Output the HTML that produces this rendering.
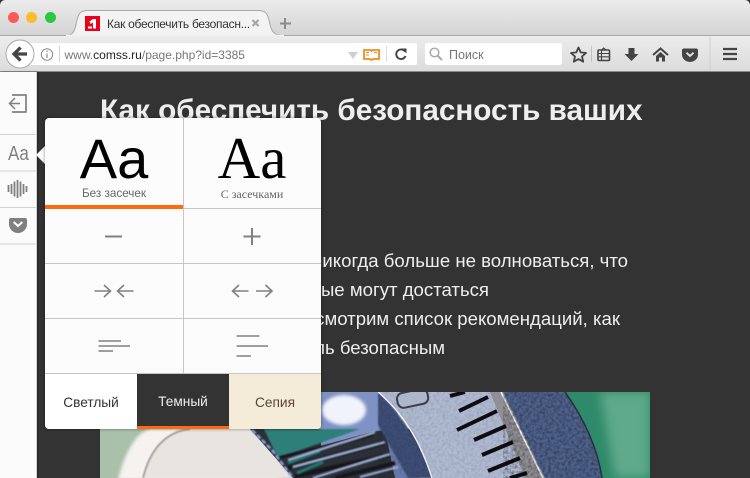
<!DOCTYPE html>
<html lang="ru"><head><meta charset="utf-8"><title>Как обеспечить безопасность</title>
<style>
html,body{margin:0;padding:0;width:750px;height:478px;overflow:hidden;background:#333;font-family:"Liberation Sans",sans-serif}
*{box-sizing:border-box}
.a{position:absolute;white-space:nowrap}
#titlebar{left:0;top:0;width:750px;height:36px;background:linear-gradient(#ececec,#d4d4d4);border-top-left-radius:5px;border-top-right-radius:5px;border-bottom:1px solid #a9a9a9}
#toolbar{left:0;top:36px;width:750px;height:36px;background:linear-gradient(#ececec,#dcdcdc);border-bottom:1px solid #8d8d8d}
.dot{width:11px;height:11px;border-radius:50%;top:12px}
.t{color:#eee;font-size:18.600px;line-height:29px}
.lbl{font-size:13.700px;color:#333;text-align:center;line-height:16px}
</style></head><body>
<div class="a" id="titlebar"></div>
<div class="a" id="toolbar"></div>
<div class="a dot" style="left:8px;background:#fc5b57"></div>
<div class="a dot" style="left:26px;background:#fdbc2e"></div>
<div class="a dot" style="left:44.500px;background:#28c83f"></div>

<svg class="a" style="left:0;top:0" width="750" height="72" viewBox="0 0 750 72">
<path d="M66 35.500C74 35.500 75 30 77 20C78.500 13 81 10.500 88 10.500H258C265 10.500 267.500 13 269 20C271 30 272 35.500 284 35.500Z" fill="#f3f3f3" stroke="#a8a8a8"/>
<path d="M66 35.500H284" stroke="#f1f1f1" stroke-width="1.500"/>
<rect x="85" y="16" width="15" height="15" fill="#e8001c"/>
<path d="M89.500 21.500L93 19H96V28.500H93V22.500L90.500 24ZM88 26.500H92V28.500H88Z" fill="#fff"/>
<path d="M252.500 20L258.500 26M258.500 20L252.500 26" stroke="#a6a6a6" stroke-width="2.200"/>
<path d="M285 18V29M280 23.500H291" stroke="#8c8c8c" stroke-width="2"/>
<path d="M30 43H415Q417 43 417 45V63Q417 65 415 65H30Z" fill="#fff"/>
<rect x="425" y="43" width="137" height="22" rx="2.500" fill="#fff"/>
<circle cx="20" cy="54" r="14" fill="#fff" stroke="#a9a9a9"/>
<path d="M20.500 47.500L14 54L20.500 60.500M14.500 54H27" fill="none" stroke="#444" stroke-width="3.300"/>
<circle cx="47" cy="54.500" r="5.700" fill="none" stroke="#8a8a8a"/>
<path d="M47 53.500V58M47 50.500V52" stroke="#8a8a8a" stroke-width="1.200"/>
<path d="M59.500 46V62" stroke="#d2d2d2"/>
<path d="M348 52H358L353 59Z" fill="#cfcfcf"/>
<path d="M364 50H370.500L371.500 51L372.500 50H379V59H373L371.500 60L370 59H364Z" fill="#fff" stroke="#f28a1e" stroke-width="1.800"/>
<path d="M366 52.500H369M366 55H369M374 52.500H377" stroke="#f28a1e"/>
<path d="M386.500 46V62" stroke="#dcdcdc"/>
<path d="M405 51.500A4.800 4.800 0 1 0 405.500 56" fill="none" stroke="#444" stroke-width="1.900"/>
<path d="M401.500 48.500H406.500V53.500Z" fill="#444"/>
<circle cx="434.500" cy="52.500" r="4.300" fill="none" stroke="#aaa" stroke-width="1.500"/>
<path d="M437.500 55.500L442 60" stroke="#aaa" stroke-width="2"/>
<path d="M578.500 47.500L580.700 52.400L586 53L582 56.500L583.200 61.700L578.500 59L573.800 61.700L575 56.500L571 53L576.300 52.400Z" fill="none" stroke="#444" stroke-width="1.800" stroke-linejoin="round"/>
<path d="M591.500 46V62" stroke="#c0c0c0"/>
<rect x="598" y="50" width="11.500" height="10.500" rx="1" fill="none" stroke="#444" stroke-width="1.600"/>
<path d="M601.500 50L603.700 48L606 50M598 53.500H609.500M598 56.800H609.500M601.500 50V60" fill="none" stroke="#444" stroke-width="1.100"/>
<path d="M628.500 48H634.500V54H638.500L631.500 61L624.500 54H628.500Z" fill="#444"/>
<path d="M653 55L660.500 48.500L668 55" fill="none" stroke="#444" stroke-width="2"/>
<path d="M656 56L660.500 52L665 56V61.500H662V57.500H659V61.500H656Z" fill="#444"/>
<path d="M684 48.500H696Q698 48.500 698 50.500V54.500A8 7.500 0 0 1 682 54.500V50.500Q682 48.500 684 48.500Z" fill="#444"/>
<path d="M686.500 52.700L690 56L693.500 52.700" fill="none" stroke="#e4e4e4" stroke-width="1.900"/>
<path d="M710 37V71" stroke="#cfcfcf"/>
<path d="M723 49H737M723 54H737M723 59H737" stroke="#444" stroke-width="2.200"/>
<path d="M0 71.500H750" stroke="#8a8a8a"/>
</svg>
<div class="a" style="left:107px;top:16px;font-size:12px;line-height:16px;color:#333;letter-spacing:-.28px">Как обеспечить безопасн...</div>
<div class="a" style="left:64.500px;top:47px;font-size:12px;line-height:16px;color:#777">www.<span style="color:#222">comss.ru</span>/page.php?id=3385</div>
<div class="a" style="left:449px;top:47px;font-size:12.500px;line-height:16px;color:#777">Поиск</div>

<div class="a" style="left:37px;top:72px;width:713px;height:406px;background:#333"></div>
<div class="a" style="left:100px;top:94px;font-size:29.700px;line-height:34px;font-weight:bold;color:#eee">Как обеспечить безопасность ваших</div>
<div class="a t" style="right:122px;top:246px">Вы можете никогда больше не волноваться, что</div>
<div class="a t" style="right:261px;top:275px">личные данные могут достаться</div>
<div class="a t" style="right:130px;top:304px">Далее рассмотрим список рекомендаций, как</div>
<div class="a t" style="right:305px;top:333px">сделать профиль безопасным</div>

<svg class="a" style="left:100px;top:392px" width="550" height="86" viewBox="100 392 550 86">
<defs>
<filter id="b1" x="-20%" y="-20%" width="140%" height="140%"><feGaussianBlur stdDeviation="5"/></filter>
<filter id="b2" x="-20%" y="-20%" width="140%" height="140%"><feGaussianBlur stdDeviation=".8"/></filter>
<filter id="b3" x="-20%" y="-20%" width="140%" height="140%"><feGaussianBlur stdDeviation="1.500"/></filter>
<filter id="n" x="0" y="0" width="100%" height="100%"><feTurbulence type="fractalNoise" baseFrequency=".35" numOctaves="2" seed="4"/><feColorMatrix values="0 0 0 0 0 0 0 0 0 0 0 0 0 0 0 0 0 0 1.300 -.45"/></filter>
</defs>
<rect x="100" y="392" width="550" height="86" fill="#a9c0ab"/>
<path d="M118 480C124 455 135 432 152 428H280V480Z" fill="#f5f2f0" filter="url(#b3)"/>
<path d="M143 478C150 450 165 432 190 429H250L293 478Z" fill="#e8e4df" filter="url(#b2)"/>
<path d="M143 478C150 450 165 432 190 429" fill="none" stroke="#8f8b86" stroke-width="1.500" filter="url(#b2)"/>
<path d="M250 429H420V478H293Z" fill="#2b3038"/>
<path d="M321 392H390L420 478H395L385 430L321 441Z" fill="#6a7cab"/>
<path d="M321 392H385V428L321 446Z" fill="#7f92c4"/>
<ellipse cx="344" cy="410" rx="22" ry="15" fill="#f0f3fb" filter="url(#b3)"/>
<path d="M264 429H360L278 458Z" fill="#2f7f7a" filter="url(#b2)"/>
<g filter="url(#b2)">
<path d="M278 458L373 435" stroke="#15181c" stroke-width="3"/>
<path d="M287 468L383 443" stroke="#15181c" stroke-width="4.500"/>
<path d="M295 476L390 455" stroke="#15181c" stroke-width="4.500"/>
<path d="M335 478L395 463" stroke="#15181c" stroke-width="4"/>
<path d="M288 463L320 451" stroke="#1f7a6c" stroke-width="3"/>
<path d="M297 473L323 462" stroke="#1f7a6c" stroke-width="3"/>
<path d="M288 460L375 432" stroke="#a3b4da" stroke-width="2"/>
<path d="M293 467L385 442" stroke="#a3b4da" stroke-width="2"/>
<path d="M313 478L390 454" stroke="#a3b4da" stroke-width="2"/>
<path d="M360 477L398 467" stroke="#a3b4da" stroke-width="2"/>
</g>
<path d="M252 430L272 450L293 478" fill="none" stroke="#8ea3d8" stroke-width="2.500" stroke-dasharray="5 2" filter="url(#b2)"/>
<path d="M378 425L408 478L432 478C424 450 405 420 378 392Z" fill="#3e4d74" filter="url(#b2)"/>
<path d="M378 392H500L545 478H432C420 440 402 412 378 392Z" fill="#b0bad2"/>
<path d="M378 392H500L545 478H432C420 440 402 412 378 392Z" filter="url(#n)" opacity=".18"/>
<path d="M378 392C402 412 420 440 432 478" fill="none" stroke="#f0f2fa" stroke-width="1.300"/>
<path d="M490 392H503L545 478H525Z" fill="#8f8f95"/>
<path d="M501 392L543 478" stroke="#f4f4f8" stroke-width="1.500"/>
<rect x="397" y="391" width="31" height="15" rx="6" fill="#aeb6cc" stroke="#3c3f48" stroke-width="2" transform="rotate(-12 412 398)"/>
<path d="M450 396L465 392M459 411L488 397M457 430L497 411M474 440L506 426M482 455L513 442M488 471L520 458M510 478L527 473" stroke="#0e0e12" stroke-width="4"/>
<path d="M503 392H565C585 420 598 450 602 478H545Z" fill="#4f628c"/>
<path d="M503 392H565C585 420 598 450 602 478H545Z" filter="url(#n)" opacity=".55"/>
<path d="M565 392C585 420 598 450 602 478H650V392Z" fill="#2e8a6a"/>
<path d="M600 392H650V478H615Z" fill="#5fa98c" filter="url(#b1)"/>
<path d="M565 392C585 420 598 450 602 478" fill="none" stroke="#25303e" stroke-width="1.500"/>
</svg>

<div class="a" style="left:0;top:72px;width:37px;height:406px;background:#fbfbfb;border-right:1px solid #d2d2d2;box-shadow:1px 0 2px rgba(0,0,0,.3)"></div>
<svg class="a" style="left:0;top:72px" width="50" height="180" viewBox="0 72 50 180">
<path d="M0 134.500H37M0 171H37M0 207.500H37M0 244H37" stroke="#d2d2d2"/>
<path d="M12 95H26V112H12" fill="none" stroke="#808080" stroke-width="1.700" stroke-linejoin="round"/>
<path d="M10.500 103.500H20M15 98L9.500 103.500L15 109" fill="none" stroke="#808080" stroke-width="1.500"/>
<path d="M8.500 185V192M11.500 184V194M14.500 181.500V196.500M17.500 180V198M20.500 181.500V196.500M23.500 184V194M26.500 186V192" stroke="#808080" stroke-width="1.800"/>
<path d="M11 218H25Q27 218 27 220V224A9 9 0 0 1 9 224V220Q9 218 11 218Z" fill="#808080"/>
<path d="M13.700 222L18 226L22.300 222" fill="none" stroke="#fff" stroke-width="2"/>
<path d="M36 155L45 146V164Z" fill="#fdfdfd"/>
</svg>
<div class="a" style="left:8px;top:143px;font-size:20px;line-height:22px;color:#808080;transform:scaleX(.85);transform-origin:left">Aa</div>

<div class="a" style="left:45px;top:118px;width:276px;height:311px;background:#fcfcfc;border-radius:4px;box-shadow:0 0 3px rgba(0,0,0,.45);overflow:hidden">
<svg class="a" style="left:0;top:0" width="276" height="311" viewBox="45 118 276 311">
<path d="M183.500 118V374" stroke="#c6c6c6"/>
<path d="M45 208.500H321M45 263.500H321M45 318.500H321M45 373.500H321" stroke="#c6c6c6"/>
<rect x="45" y="205" width="138" height="4" fill="#ff6a0c"/>
<path d="M105 236.500H122" stroke="#808080" stroke-width="2"/>
<path d="M252 228V245M243.500 236.500H260.500" stroke="#808080" stroke-width="2"/>
<g fill="none" stroke="#808080" stroke-width="1.600">
<path d="M94.500 291H110M104 285L110.500 291L104 297"/>
<path d="M133.500 291H118M124 285L117.500 291L124 297"/>
<path d="M248.500 291H233M239 285L232.500 291L239 297"/>
<path d="M256 291H271.500M265.500 285L272 291L265.500 297"/>
<path d="M98.500 341H121M98.500 346H130M98.500 351H113"/>
<path d="M236.500 336H259.500M236.500 346H268M236.500 356H251"/>
</g>
<rect x="45" y="374" width="92" height="55" fill="#fff"/>
<rect x="137" y="374" width="92" height="55" fill="#333"/>
<rect x="229" y="374" width="92" height="55" fill="#f4ecd8"/>
<rect x="137" y="426" width="92" height="3" fill="#ff6a0c"/>
</svg>
<div class="a" style="left:0;top:9px;width:138px;text-align:center;font-size:56px;line-height:64px;color:#000">Aa</div>
<div class="a" style="left:0;top:68px;width:138px;text-align:center;font-size:11.700px;line-height:16px;color:#666">Без засечек</div>
<div class="a" style="left:138px;top:8px;width:138px;text-align:center;font-size:59px;line-height:64px;color:#000;font-family:'Liberation Serif',serif">Aa</div>
<div class="a" style="left:138px;top:68px;width:138px;text-align:center;font-size:12px;line-height:16px;color:#666;font-family:'Liberation Serif',serif">С засечками</div>
<div class="a lbl" style="left:0;top:277px;width:92px">Светлый</div>
<div class="a lbl" style="left:92px;top:276px;width:92px;color:#eee">Темный</div>
<div class="a lbl" style="left:184px;top:277px;width:92px;color:#5b4636">Сепия</div>
</div>
</body></html>
